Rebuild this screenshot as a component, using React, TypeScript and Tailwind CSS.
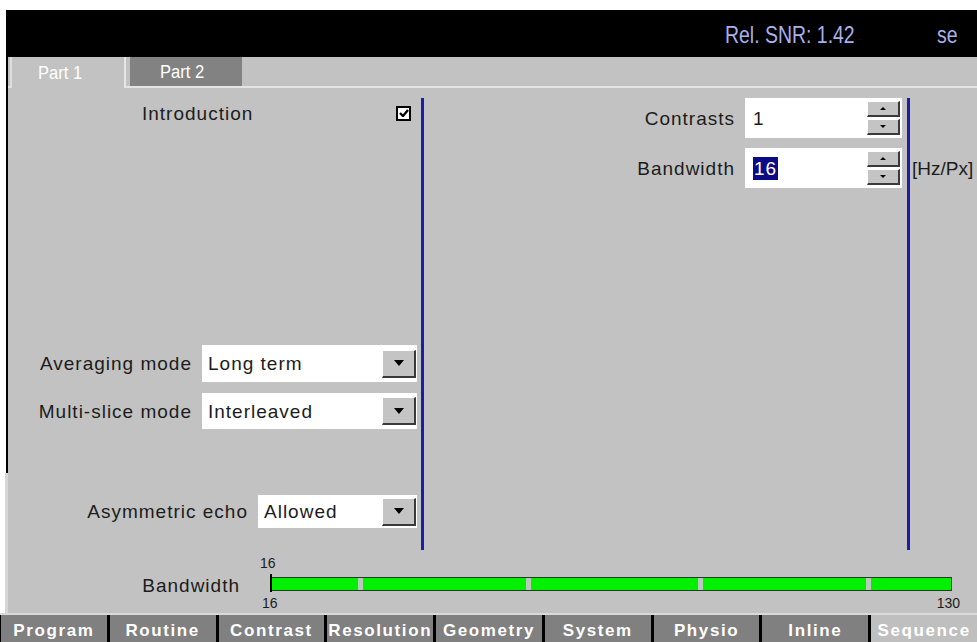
import React from 'react';

const Spinner = () => (
  <div className="flex flex-col gap-[2px] w-[33px]">
    {['up', 'down'].map(dir => (
      <div
        key={dir}
        className="h-[16px] bg-[#c4c4c4] border-t border-l border-t-white border-l-white border-b-2 border-r-2 border-b-[#3a3a3a] border-r-[#3a3a3a] flex items-center justify-center"
      >
        {dir === 'up' ? (
          <div className="w-0 h-0 border-l-[3px] border-r-[3px] border-b-[3px] border-l-transparent border-r-transparent border-b-black" />
        ) : (
          <div className="w-0 h-0 border-l-[3px] border-r-[3px] border-t-[3px] border-l-transparent border-r-transparent border-t-black" />
        )}
      </div>
    ))}
  </div>
);

const DropButton = () => (
  <div className="w-[34px] h-[28px] bg-[#c4c4c4] border-t border-l border-t-white border-l-white border-b-2 border-r-2 border-b-[#3a3a3a] border-r-[#3a3a3a] flex items-center justify-center">
    <div className="w-0 h-0 border-l-[5px] border-r-[5px] border-t-[6px] border-l-transparent border-r-transparent border-t-black" />
  </div>
);

interface SelectRowProps {
  label: string;
  value: string;
  width: string;
  height: string;
  mt: string;
}

const SelectRow: React.FC<SelectRowProps> = ({ label, value, width, height, mt }) => (
  <div className={`flex items-center justify-end gap-[10px] pr-[4px] ${mt}`}>
    <span className="text-[#1c1c1c]">{label}</span>
    <div className={`bg-white flex items-center justify-between pl-[6px] pr-[1px] ${width} ${height}`}>
      <span className="text-[#1c1c1c]">{value}</span>
      <DropButton />
    </div>
  </div>
);

const bottomTabs = ['Program', 'Routine', 'Contrast', 'Resolution', 'Geometry', 'System', 'Physio', 'Inline', 'Sequence'];

export default function App() {
  return (
    <div className="w-[977px] h-[642px] bg-white overflow-hidden font-['Liberation_Sans',Arial,sans-serif] text-[19px] tracking-[1px] leading-none">
      <div className="h-[10px]" />

      {/* status header */}
      <div className="ml-[6px] h-[47px] bg-black flex items-center pt-[2px] text-[#a9b0ea] text-[24px] tracking-normal">
        <div className="ml-[719px] w-[130px] whitespace-nowrap">
          <span className="inline-block origin-left scale-x-[0.81]">Rel. SNR: 1.42</span>
        </div>
        <div className="ml-[82px] whitespace-nowrap">
          <span className="inline-block origin-left scale-x-[0.81]">se</span>
        </div>
      </div>

      <div className="flex h-[556px]">
        {/* left frame edge */}
        <div className="w-[8px] flex flex-col">
          <div className="ml-[6px] w-[2px] h-[416px] bg-black" />
          <div className="ml-[5px] w-[3px] flex-1 bg-[#d6d6d6]" />
        </div>

        <div className="flex-1 flex flex-col bg-[#c2c2c2]">
          {/* part tabs */}
          <div className="h-[31px] flex items-end border-b-2 border-b-[#e4e4e4]">
            <div className="ml-[2px] w-[116px] h-[31px] -mb-[2px] bg-[#c2c2c2] border-l-2 border-r-2 border-l-[#dedede] border-r-[#e6e6e6] flex items-center pl-[26px] text-white text-[18px] tracking-normal">
              <span className="inline-block origin-left scale-x-[0.92]">Part 1</span>
            </div>
            <div className="ml-[4px] w-[112px] h-[29px] bg-[#828282] flex items-center pl-[30px] text-white text-[18px] tracking-normal">
              <span className="inline-block origin-left scale-x-[0.92]">Part 2</span>
            </div>
          </div>

          {/* parameter columns */}
          <div className="flex h-[462px] pt-[10px]">
            <div className="w-[413px] flex flex-col">
              <div className="mt-[2px] h-[26px] flex items-center justify-between pl-[134px] pr-[10px]">
                <span className="text-[#1c1c1c]">Introduction</span>
                <div className="w-[15px] h-[15px] border-2 border-black bg-white flex items-center justify-center">
                  <svg width="10" height="8" viewBox="0 0 10 8">
                    <path d="M1 4 L4 7 L9 1" stroke="black" strokeWidth="2.4" fill="none" />
                  </svg>
                </div>
              </div>
              <SelectRow label="Averaging mode" value="Long term" width="w-[215px]" height="h-[37px]" mt="mt-[219px]" />
              <SelectRow label="Multi-slice mode" value="Interleaved" width="w-[215px]" height="h-[36px]" mt="mt-[11px]" />
              <SelectRow label="Asymmetric echo" value="Allowed" width="w-[159px]" height="h-[33px]" mt="mt-[66px]" />
            </div>

            <div className="w-[3px] bg-[#1c1ca8]" />

            <div className="w-[483px] flex flex-col pr-[5px]">
              <div className="h-[40px] flex items-center justify-end gap-[10px]">
                <span className="text-[#1c1c1c]">Contrasts</span>
                <div className="w-[157px] h-[40px] bg-white flex items-center justify-between pl-[8px] pr-[2px]">
                  <span className="text-[#1c1c1c]">1</span>
                  <Spinner />
                </div>
              </div>
              <div className="mt-[10px] h-[40px] flex items-center justify-end gap-[10px]">
                <span className="text-[#1c1c1c]">Bandwidth</span>
                <div className="w-[157px] h-[40px] bg-white flex items-center justify-between pl-[8px] pr-[2px]">
                  <span className="bg-[#0b0b86] text-white px-[1px] py-[2px]">16</span>
                  <Spinner />
                </div>
              </div>
            </div>

            <div className="w-[3px] bg-[#1c1ca8]" />

            <div className="flex-1 pt-[50px] pl-[2px]">
              <div className="h-[40px] flex items-center text-[#1c1c1c] tracking-normal whitespace-nowrap">[Hz/Px]</div>
            </div>
          </div>

          {/* bandwidth slider */}
          <div className="flex-1 flex items-start text-[#1c1c1c]">
            <div className="w-[232px] mt-[26px] text-right">Bandwidth</div>
            <div className="ml-[30px] w-[682px] flex flex-col pt-[5px] text-[14px] tracking-normal">
              <div className="h-[16px] -ml-[10px] leading-[16px]">16</div>
              <div className="relative mt-[6px] h-[14px] bg-[#00f000] border border-[#1d3d1d]">
                <div className="absolute -left-[1px] -top-[4px] w-[2px] h-[18px] bg-black" />
                {[87, 255, 427, 595].map(x => (
                  <div key={x} className="absolute top-0 bottom-0 w-[5px] bg-[#b9c9b9]" style={{ left: x }} />
                ))}
              </div>
              <div className="h-[16px] mt-[4px] flex justify-between leading-[16px] -ml-[8px] -mr-[8px]">
                <span>16</span>
                <span>130</span>
              </div>
            </div>
          </div>
        </div>
      </div>

      {/* card tabs */}
      <div className="h-[29px] border-t-2 border-t-[#dadada] bg-black flex gap-[3px] pl-[1px]">
        {bottomTabs.map(tab => (
          <div
            key={tab}
            className={`flex-1 flex items-center justify-center pt-[3px] font-bold text-[17px] tracking-[1.6px] whitespace-nowrap overflow-hidden ${
              tab === 'Sequence' ? 'bg-[#bfbfbf] text-white' : 'bg-[#808080] text-white'
            }`}
          >
            {tab}
          </div>
        ))}
      </div>
    </div>
  );
}
